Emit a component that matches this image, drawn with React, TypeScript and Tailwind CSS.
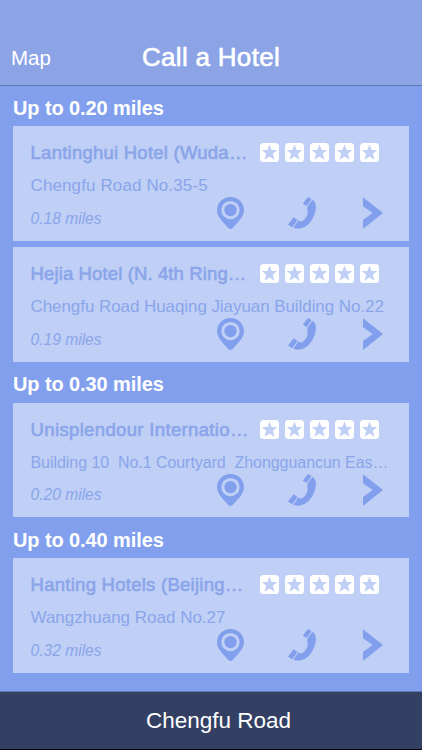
import React from 'react';

type Hotel = {
  name: string;
  nameClass: string;
  address: string;
  addressClass: string;
  distance: string;
};

type Section = { title: string; hotels: Hotel[] };

const sections: Section[] = [
  {
    title: 'Up to 0.20 miles',
    hotels: [
      {
        name: 'Lantinghui Hotel (Wuda…',
        nameClass: 'tracking-[0.24px]',
        address: 'Chengfu Road No.35-5',
        addressClass: 'text-[17px] tracking-[0.12px]',
        distance: '0.18 miles',
      },
      {
        name: 'Hejia Hotel (N. 4th Ring…',
        nameClass: 'tracking-[0.12px]',
        address: 'Chengfu Road Huaqing Jiayuan Building No.22',
        addressClass: 'text-[17px] tracking-[-0.07px]',
        distance: '0.19 miles',
      },
    ],
  },
  {
    title: 'Up to 0.30 miles',
    hotels: [
      {
        name: 'Unisplendour Internatio…',
        nameClass: 'tracking-[0.35px]',
        address: 'Building 10  No.1 Courtyard  Zhongguancun Eas…',
        addressClass: 'text-[16px] tracking-[-0.05px]',
        distance: '0.20 miles',
      },
    ],
  },
  {
    title: 'Up to 0.40 miles',
    hotels: [
      {
        name: 'Hanting Hotels (Beijing…',
        nameClass: 'tracking-[0.26px]',
        address: 'Wangzhuang Road No.27',
        addressClass: 'text-[17px]',
        distance: '0.32 miles',
      },
    ],
  },
];

function StarBadge() {
  return (
    <svg className="h-[19px] w-[19px]" viewBox="0 0 19 19">
      <rect x="0" y="0" width="19" height="19" rx="3.5" fill="#ffffff" />
      <path
        d="M9.5 1.5 11.600 7H17.2L12.8 10.800 14.500 16.800 9.5 13.400 4.500 16.800 6.200 10.800 1.8 7H7.400Z"
        fill="#c0cff6"
      />
    </svg>
  );
}

function PinIcon() {
  return (
    <svg className="h-8 w-[27px]" viewBox="0 0 27 32">
      <path
        fill="#819fec"
        fillRule="evenodd"
        d="M13.500 0C6 0 0 5.800 0 13.100 0 20 6.200 25.200 11 30.700Q13.500 33.200 16 30.700C20.800 25.200 27 20 27 13.100 27 5.800 21 0 13.500 0ZM13.500 3.900A9.200 9.200 0 1 1 13.500 22.300 9.200 9.200 0 0 1 13.500 3.900Z"
      />
      <circle cx="13.5" cy="13.1" r="6.2" fill="#819fec" />
    </svg>
  );
}

function PhoneIcon() {
  return (
    <svg className="h-8 w-7" viewBox="0 0 28 32" fill="#819fec">
      <path d="M19.800 0.300Q20.300 0 20.800 0.300L23.500 2.200 18.900 9 14.700 6.800Z" />
      <path d="M24.400 2.800C26.600 4 28 7 27.900 10.200 27.700 16 25 22.500 20.300 27.300 15.500 32 9.500 32.500 5.300 30.700L10.300 23.400C12.600 25.200 14.600 24.600 16.600 22.300 19.200 19.300 20 16.300 19.500 13.500 19.200 12 19 10.800 19.700 9.600Z" />
      <path d="M5.700 20.300 9.500 22.900 4.300 30.300Q2 29.300 0 27.500Z" />
    </svg>
  );
}

function ChevronIcon() {
  return (
    <svg className="h-8 w-5" viewBox="0 0 20 32">
      <path d="M0 0.200 20 15.900 0 32V22.900L9.600 15.900 0 9.300Z" fill="#819fec" />
    </svg>
  );
}

function HotelCard({ hotel }: { hotel: Hotel }) {
  return (
    <article className="h-[114.5px] bg-[#c0cff6] pt-[17px] pl-[17px] text-[#8aa5ea]">
      <div className="flex h-[19px] items-center">
        <h3
          className={`w-[230px] pl-[0.6px] text-[18.5px] leading-[19px] whitespace-nowrap [-webkit-text-stroke:0.6px_#8aa5ea] ${hotel.nameClass}`}
        >
          {hotel.name}
        </h3>
        <div className="flex gap-[6px]">
          {[0, 1, 2, 3, 4].map((i) => (
            <StarBadge key={i} />
          ))}
        </div>
      </div>
      <p className={`mt-[14px] h-5 pl-[0.5px] leading-5 whitespace-pre ${hotel.addressClass}`}>{hotel.address}</p>
      <div className="mt-px flex h-8 items-center">
        <span className="mt-[11px] w-[187px] pl-[0.5px] text-[15.6px] leading-5 italic">{hotel.distance}</span>
        <PinIcon />
        <div className="ml-11">
          <PhoneIcon />
        </div>
        <div className="ml-[47px]">
          <ChevronIcon />
        </div>
      </div>
    </article>
  );
}

export default function App() {
  return (
    <div className="flex h-[750px] w-[422px] flex-col overflow-hidden bg-[#819fec] font-['Liberation_Sans',Arial,sans-serif]">
      <header className="grid h-[86px] shrink-0 grid-cols-[1fr_auto_1fr] items-end border-b border-[#6079b4] bg-[#8ca4e6] text-white">
        <span className="pb-[15px] pl-[11px] text-[20.5px] leading-6">Map</span>
        <h1 className="pb-[12px] text-[26px] leading-8 tracking-[0.3px] [-webkit-text-stroke:0.6px_#fff]">
          Call a Hotel
        </h1>
      </header>
      <main className="flex-1 px-[13px]">
        {sections.map((section, i) => (
          <section key={section.title}>
            <h2
              className={`flex items-center pt-[4px] text-[20px] font-bold tracking-[-0.1px] text-white ${i === 0 ? 'h-10' : 'h-[41px]'}`}
            >
              {section.title}
            </h2>
            <div className="flex flex-col gap-[6.5px]">
              {section.hotels.map((hotel) => (
                <HotelCard key={hotel.name} hotel={hotel} />
              ))}
            </div>
          </section>
        ))}
      </main>
      <footer className="flex h-[59px] shrink-0 items-center justify-center border-t border-b border-t-[#5f78b5] border-b-black bg-[#334063] pl-[15px] text-[22.5px] text-white">
        Chengfu Road
      </footer>
    </div>
  );
}
